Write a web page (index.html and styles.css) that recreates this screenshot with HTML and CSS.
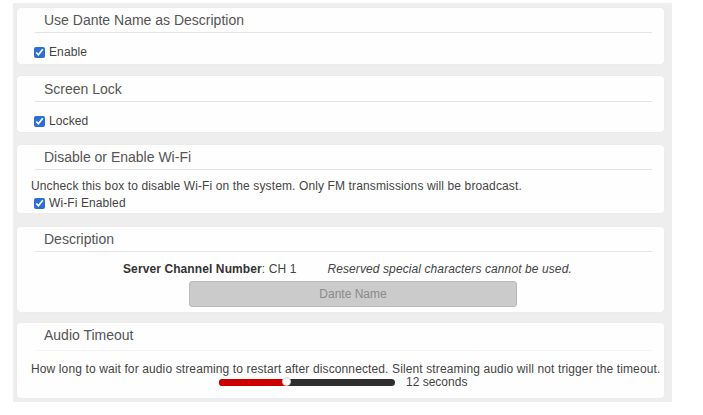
FILE: index.html
```html
<!DOCTYPE html>
<html>
<head>
<meta charset="utf-8">
<link rel="stylesheet" href="styles.css">
</head>
<body>
<div class="panel">
  <section class="card card-a">
    <h2 class="card-title">Use Dante Name as Description</h2>
    <div class="rule"></div>
    <div class="body body-check">
      <label class="check"><input type="checkbox" checked><span>Enable</span></label>
    </div>
  </section>

  <section class="card card-b">
    <h2 class="card-title">Screen Lock</h2>
    <div class="rule"></div>
    <div class="body body-check">
      <label class="check"><input type="checkbox" checked><span>Locked</span></label>
    </div>
  </section>

  <section class="card card-c">
    <h2 class="card-title">Disable or Enable Wi-Fi</h2>
    <div class="rule"></div>
    <div class="body body-wifi">
      <p class="help">Uncheck this box to disable Wi-Fi on the system. Only FM transmissions will be broadcast.</p>
      <label class="check"><input type="checkbox" checked><span>Wi-Fi Enabled</span></label>
    </div>
  </section>

  <section class="card card-d">
    <h2 class="card-title">Description</h2>
    <div class="rule"></div>
    <div class="body body-desc">
      <div class="server-row">
        <span><b>Server Channel Number</b>: CH 1</span>
        <i>Reserved special characters cannot be used.</i>
      </div>
      <button class="dante-btn" disabled>Dante Name</button>
    </div>
  </section>

  <section class="card card-e">
    <h2 class="card-title">Audio Timeout</h2>
    <div class="rule rule-faint"></div>
    <div class="body body-audio">
      <p class="help">How long to wait for audio streaming to restart after disconnected. Silent streaming audio will not trigger the timeout.</p>
      <div class="slider-row">
        <div class="track">
          <div class="fill" style="width: 68px"></div>
          <div class="thumb" style="left: 63px"></div>
        </div>
        <span class="value">12 seconds</span>
      </div>
    </div>
  </section>
</div>
</body>
</html>
```

FILE: styles.css
```css
html, body {
  margin: 0;
  padding: 0;
  background: #ffffff;
}

body {
  font-family: "Liberation Sans", Arial, Helvetica, sans-serif;
  color: #444;
  width: 703px;
  height: 415px;
  overflow: hidden;
}

.panel {
  margin: 3px 0 0 13px;
  width: 659px;
  box-sizing: border-box;
  background: #eeeeee;
  padding: 5px 8px 4px 4px;
  display: flex;
  flex-direction: column;
}

.card {
  background: #fefefe;
  border-radius: 4px;
  box-shadow: 0 0 2px rgba(0, 0, 0, 0.04);
  box-sizing: border-box;
}

.card-a { height: 56px; margin-bottom: 12px; }
.card-b { height: 56px; margin-bottom: 13px; }
.card-c { height: 68px; margin-bottom: 14px; }
.card-d { height: 85px; margin-bottom: 11px; }
.card-e { height: 75px; }

.card-title {
  margin: 0;
  padding: 4px 0 0 27px;
  height: 20px;
  font-size: 14px;
  line-height: 16px;
  font-weight: normal;
  color: #555;
}

.card-b .card-title { padding-top: 5px; height: 20px; }

.rule {
  height: 1px;
  background: #e4e4e4;
  margin: 0 12px 0 18px;
}

.rule-faint {
  background: #f4f4f4;
  margin-top: 3px;
}

.body {
  padding-left: 14px;
}

.body-check {
  padding-top: 12px;
}

.check {
  display: flex;
  align-items: center;
  font-size: 12px;
  line-height: 14px;
  color: #444;
  letter-spacing: 0.1px;
}

.check input {
  width: 11px;
  height: 11px;
  margin: 0 4px 0 3px;
  accent-color: #2a6fd8;
}

.help {
  margin: 0;
  font-size: 12px;
  line-height: 13px;
  letter-spacing: 0.12px;
  color: #444;
  white-space: nowrap;
}

.body-wifi {
  padding-top: 10px;
}

.body-wifi .check {
  margin-top: 3px;
}

.body-desc {
  padding-left: 0;
  padding-top: 10px;
}

.server-row {
  margin-left: 106px;
  display: flex;
  gap: 31px;
  font-size: 12px;
  line-height: 14px;
  letter-spacing: 0.1px;
  color: #444;
}

.server-row b {
  color: #333;
}

.dante-btn {
  display: block;
  margin: 5px 0 0 172px;
  width: 328px;
  height: 26px;
  background: #cbcbcb;
  border: 1px solid #b9b9b9;
  border-radius: 3px;
  font-family: inherit;
  font-size: 12px;
  color: #8a8a8a;
  padding: 0;
}

.body-audio {
  padding-top: 12px;
}

.slider-row {
  display: flex;
  align-items: center;
  margin: 0 0 0 188px;
  height: 12px;
  gap: 11px;
}

.track {
  position: relative;
  width: 176px;
  height: 7px;
  background: #2e2e2e;
  border-radius: 4px;
}

.fill {
  height: 100%;
  background: #cc0000;
  border-radius: 4px 0 0 4px;
}

.thumb {
  position: absolute;
  top: -2px;
  width: 9px;
  height: 9px;
  border-radius: 50%;
  background: #ffffff;
  border: 1px solid #d8d8d8;
  box-sizing: border-box;
}

.value {
  font-size: 12px;
  color: #444;
}
```
